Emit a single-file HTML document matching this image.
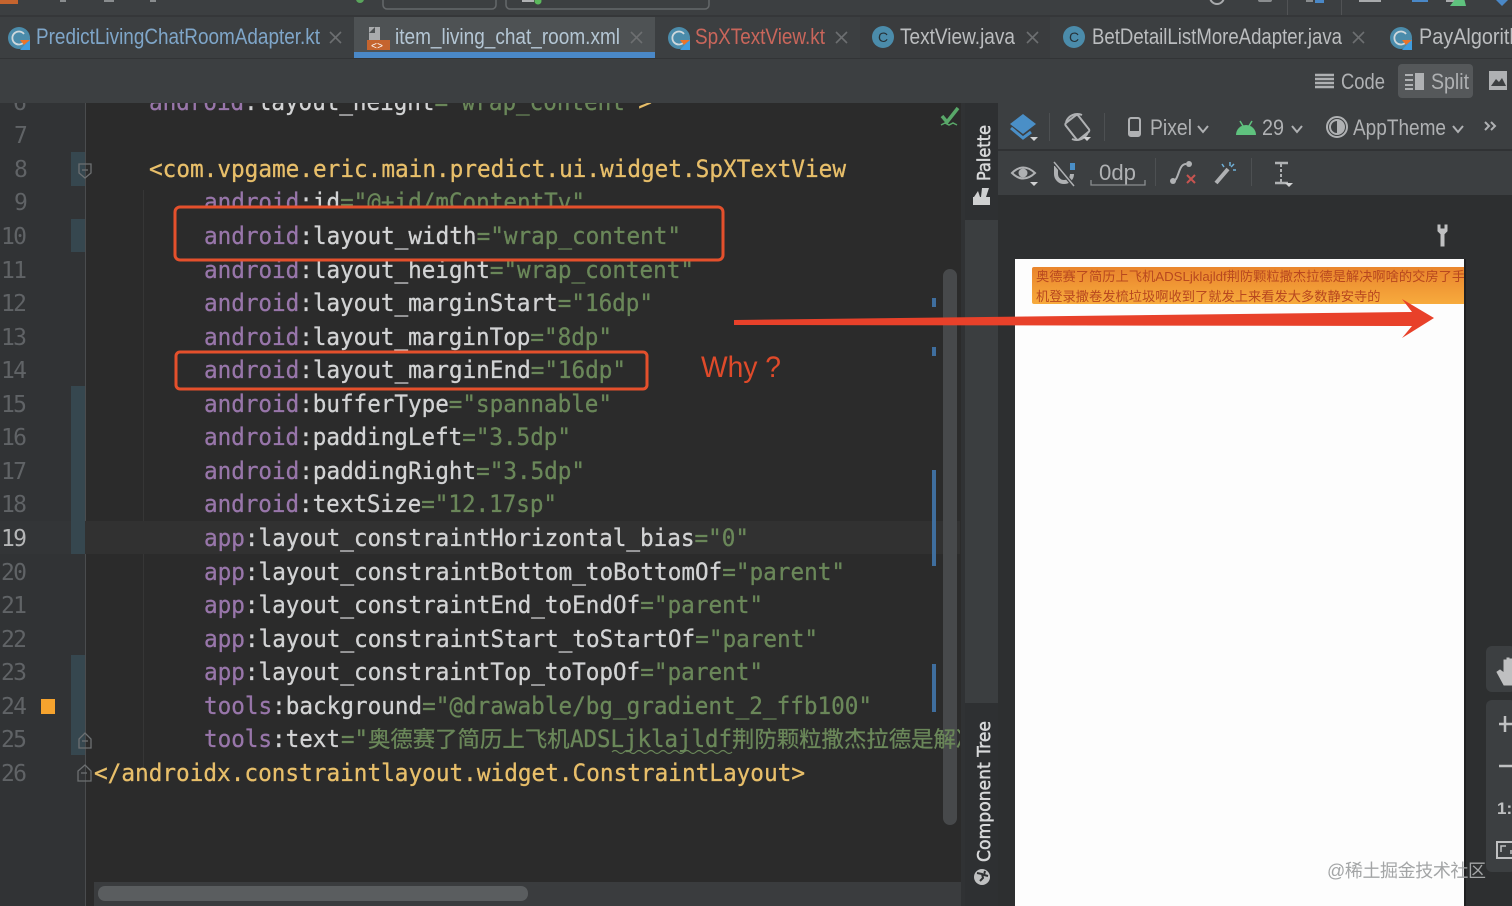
<!DOCTYPE html>
<html><head><meta charset="utf-8"><style>
html,body{margin:0;padding:0;background:#2b2b2b;width:1512px;height:906px;overflow:hidden}
svg{display:block}
.c{font-family:"DejaVu Sans Mono","Noto Sans CJK SC",monospace;font-size:24px}
.n{font-family:"DejaVu Sans Mono",monospace;font-size:23px;fill:#606366}
.t{font-family:"Liberation Sans",sans-serif;font-size:22px}
.u{font-family:"Liberation Sans",sans-serif;font-size:22px;fill:#afb1b3}
.a{fill:#9876aa;stroke:#9876aa;stroke-width:.3}.w{fill:#d2d3d4;stroke:#d2d3d4;stroke-width:.3}.g{fill:#6a8759;stroke:#6a8759;stroke-width:.3}.y{fill:#e8bf6a;stroke:#e8bf6a;stroke-width:.3}
.x{stroke:#6d6f71;stroke-width:1.6;fill:none}
.i{fill:none;stroke:#afb1b3;stroke-width:2}
</style></head><body>
<svg width="1512" height="906" viewBox="0 0 1512 906" xmlns="http://www.w3.org/2000/svg">
<defs>
<linearGradient id="og" x1="0" y1="0" x2="0" y2="1"><stop offset="0" stop-color="#e9842c"/><stop offset="1" stop-color="#f7ab3d"/></linearGradient>
<clipPath id="ed"><rect x="0" y="103" width="960" height="803"/></clipPath>
<clipPath id="pv"><rect x="1015" y="259" width="449" height="647"/></clipPath>
<clipPath id="top"><rect x="0" y="0" width="1512" height="15"/></clipPath>
</defs>
<!-- top chrome -->
<rect width="1512" height="103" fill="#3c3f41"/>
<rect y="15" width="1512" height="2" fill="#353739"/>
<rect y="58" width="1512" height="1" fill="#323436"/>
<g clip-path="url(#top)">
<rect x="0" y="-6" width="18" height="10" fill="#c5642e"/>
<rect x="383" y="-10" width="113" height="19" rx="4" fill="none" stroke="#65686a" stroke-width="1.5"/>
<rect x="506" y="-10" width="203" height="19" rx="4" fill="none" stroke="#65686a" stroke-width="1.5"/>
<circle cx="538" cy="1" r="3.5" fill="#5bb85c"/>
<rect x="522" y="-4" width="12" height="6" fill="#afb1b3"/>
<circle cx="360" cy="-1" r="4" fill="#5aa55c"/>
<rect x="60" y="-3" width="6" height="5" fill="#8a8d8f"/><rect x="104" y="-3" width="10" height="5" fill="#8a8d8f"/><rect x="150" y="-3" width="6" height="5" fill="#8a8d8f"/>
<circle cx="1217" cy="-3" r="7" fill="none" stroke="#a8aaac" stroke-width="2"/>
<rect x="1258" y="-3" width="14" height="5" rx="2" fill="#8a8d8f"/>
<rect x="1306" y="-3" width="7" height="5" fill="#8a8d8f"/><rect x="1315" y="-3" width="9" height="6" fill="#4a88c7"/>
<rect x="1359" y="-3" width="22" height="5" fill="#a8aaac"/>
<rect x="1412" y="-3" width="16" height="5" fill="#4a88c7"/>
<path d="M1446 -3h10v5h-10z" fill="#a8aaac"/><path d="M1450 6l6-8 8 0 2 8z" fill="#5fc27e"/>
<path d="M1494 -2h16l-8 8z" fill="#4a88c7"/>
</g>
<rect x="1287" y="0" width="1" height="15" fill="#515355"/><rect x="1341" y="0" width="1" height="15" fill="#515355"/>
<!-- tabs -->
<rect x="354" y="17" width="301" height="41" fill="#4e5254"/>
<rect x="354" y="52" width="301" height="6" fill="#4a88c7"/>
<rect x="860" y="17" width="190" height="41" fill="#3a3c3e"/>
<!-- tab icons -->
<g>
<circle cx="19" cy="38" r="11" fill="#4b8cab"/><path d="M24 34a6.500 6.500 0 1 0 0 8" fill="none" stroke="#cfd8dc" stroke-width="1.8"/><path d="M20 50l10-11v11z" fill="#3f9de0"/><path d="M20 40l10 0-6 5z" fill="#e8742c"/>
<path d="M369 27h11v13h-11z" fill="#a9abad"/><path d="M369 33l6-6v6z" fill="#4e5254"/><rect x="367" y="40" width="23" height="10" fill="#c5642e"/><text x="371" y="49" font-family="Liberation Mono" font-size="10" fill="#fff">&lt;&gt;</text>
<circle cx="679" cy="38" r="11" fill="#4b8cab"/><path d="M684 34a6.500 6.500 0 1 0 0 8" fill="none" stroke="#cfd8dc" stroke-width="1.800"/><path d="M680 50l10-11v11z" fill="#3f9de0"/><path d="M680 40l10 0-6 5z" fill="#e8742c"/>
<circle cx="883" cy="37" r="11" fill="#4b8cab"/><text x="878" y="42" font-family="Liberation Sans" font-size="14" fill="#263238">C</text>
<circle cx="1074" cy="37" r="11" fill="#4b8cab"/><text x="1069" y="42" font-family="Liberation Sans" font-size="14" fill="#263238">C</text>
<circle cx="1401" cy="38" r="11" fill="#4b8cab"/><path d="M1406 34a6.500 6.500 0 1 0 0 8" fill="none" stroke="#cfd8dc" stroke-width="1.800"/><path d="M1402 50l10-11v11z" fill="#3f9de0"/><path d="M1402 40l10 0-6 5z" fill="#e8742c"/>
</g>
<text class="t" x="36" y="44" fill="#7fa6c9" textLength="284" lengthAdjust="spacingAndGlyphs">PredictLivingChatRoomAdapter.kt</text>
<text class="t" x="395" y="44" fill="#b4c6d4" textLength="225" lengthAdjust="spacingAndGlyphs">item_living_chat_room.xml</text>
<text class="t" x="695" y="44" fill="#c9665b" textLength="130" lengthAdjust="spacingAndGlyphs">SpXTextView.kt</text>
<text class="t" x="900" y="44" fill="#bbbdbf" textLength="115" lengthAdjust="spacingAndGlyphs">TextView.java</text>
<text class="t" x="1092" y="44" fill="#bbbdbf" textLength="250" lengthAdjust="spacingAndGlyphs">BetDetailListMoreAdapter.java</text>
<text class="t" x="1419" y="44" fill="#bbbdbf" textLength="118" lengthAdjust="spacingAndGlyphs">PayAlgorithm</text>
<path class="x" d="M330 32l11 11M341 32l-11 11M631 32l11 11M642 32l-11 11M836 32l11 11M847 32l-11 11M1027 32l11 11M1038 32l-11 11M1353 32l11 11M1364 32l-11 11"/>
<!-- code/split -->
<path d="M1315 75h19M1315 79h19M1315 83h19M1315 87h19" stroke="#afb1b3" stroke-width="2.400"/>
<text class="u" x="1341" y="89" textLength="44" lengthAdjust="spacingAndGlyphs">Code</text>
<rect x="1398" y="64" width="75" height="34" rx="4" fill="#55585a"/>
<path d="M1405 75h8M1405 80h8M1405 85h8M1405 89h8" stroke="#afb1b3" stroke-width="2"/><rect x="1415" y="73" width="9" height="17" fill="#afb1b3"/>
<text class="u" x="1431" y="89" textLength="38" lengthAdjust="spacingAndGlyphs">Split</text>
<rect x="1489" y="71" width="18" height="19" fill="#afb1b3"/><path d="M1491 86l5-7 3 3 3-4 4 8z" fill="#3c3f41"/>
<!-- editor -->
<rect x="0" y="103" width="965" height="803" fill="#2b2b2b"/>
<rect x="0" y="103" width="85" height="803" fill="#313335"/>
<rect x="85" y="103" width="1" height="803" fill="#4a4c4e"/>
<rect x="143" y="190" width="1" height="590" fill="#363636"/>
<rect x="85" y="521" width="875" height="33" fill="#313131"/>
<rect x="0" y="521" width="85" height="33" fill="#333537"/>
<!-- editor scrollbars drawn beneath the code text -->
<rect x="94" y="882" width="868" height="24" fill="#3a3c3e"/>
<rect x="98" y="886" width="430" height="15" rx="7" fill="#5a5d5f"/>
<rect x="943" y="269" width="14" height="556" rx="7" fill="#47494b"/>
<g fill="#3f6e9e"><rect x="932" y="298" width="4" height="9"/><rect x="932" y="347" width="4" height="9"/><rect x="932" y="470" width="4" height="96"/><rect x="932" y="664" width="4" height="48"/></g>
<g fill="#36474f"><rect x="71" y="152" width="14" height="34"/><rect x="71" y="219" width="14" height="33"/><rect x="71" y="386" width="14" height="168"/><rect x="71" y="655" width="14" height="100"/></g>
<g fill="none" stroke="#6d7072" stroke-width="1.300"><path d="M79 164h12v9l-6 5-6-5z"/><path d="M82 170h6"/><path d="M79 748h12v-9l-6-6-6 6z"/><path d="M82 741h6"/><path d="M78 781h13v-10l-6-6-7 6z"/><path d="M81 773h6"/></g>
<g class="n" clip-path="url(#ed)">
<text x="13" y="110">6</text>
<text x="14" y="143">7</text><text x="14" y="177">8</text><text x="14" y="210">9</text>
<text x="1" y="244" textLength="26">10</text><text x="1" y="278" textLength="26">11</text><text x="1" y="311" textLength="26">12</text><text x="1" y="345" textLength="26">13</text><text x="1" y="378" textLength="26">14</text><text x="1" y="412" textLength="26">15</text><text x="1" y="445" textLength="26">16</text><text x="1" y="479" textLength="26">17</text><text x="1" y="512" textLength="26">18</text>
<text x="1" y="546" textLength="26" style="fill:#b5b6b7">19</text>
<text x="1" y="580" textLength="26">20</text><text x="1" y="613" textLength="26">21</text><text x="1" y="647" textLength="26">22</text><text x="1" y="680" textLength="26">23</text><text x="1" y="714" textLength="26">24</text><text x="1" y="747" textLength="26">25</text><text x="1" y="781" textLength="26">26</text>
</g>
<rect x="41" y="699" width="14" height="15" fill="#f5a32e"/>
<g class="c" clip-path="url(#ed)">
<text x="149" y="110" textLength="503" lengthAdjust="spacingAndGlyphs"><tspan class="a">android</tspan><tspan class="w">:layout_height</tspan><tspan class="g">="wrap_content"</tspan><tspan class="y">&gt;</tspan></text>
<text x="149" y="177" textLength="697" lengthAdjust="spacingAndGlyphs" class="y">&lt;com.vpgame.eric.main.predict.ui.widget.SpXTextView</text>
<text x="204" y="210" textLength="381" lengthAdjust="spacingAndGlyphs"><tspan class="a">android</tspan><tspan class="w">:id</tspan><tspan class="g">="@+id/mContentTv"</tspan></text>
</g>
<!-- box 1 fill -->
<rect x="175" y="207" width="548" height="53" rx="5" fill="#2b2b2b"/>
<g class="c" clip-path="url(#ed)">
<text x="204" y="244" textLength="477" lengthAdjust="spacingAndGlyphs"><tspan class="a">android</tspan><tspan class="w">:layout_width</tspan><tspan class="g">="wrap_content"</tspan></text>
<text x="204" y="278" textLength="490" lengthAdjust="spacingAndGlyphs"><tspan class="a">android</tspan><tspan class="w">:layout_height</tspan><tspan class="g">="wrap_content"</tspan></text>
<text x="204" y="311" textLength="449" lengthAdjust="spacingAndGlyphs"><tspan class="a">android</tspan><tspan class="w">:layout_marginStart</tspan><tspan class="g">="16dp"</tspan></text>
<text x="204" y="345" textLength="408" lengthAdjust="spacingAndGlyphs"><tspan class="a">android</tspan><tspan class="w">:layout_marginTop</tspan><tspan class="g">="8dp"</tspan></text>
<text x="204" y="378" textLength="422" lengthAdjust="spacingAndGlyphs"><tspan class="a">android</tspan><tspan class="w">:layout_marginEnd</tspan><tspan class="g">="16dp"</tspan></text>
<text x="204" y="412" textLength="408" lengthAdjust="spacingAndGlyphs"><tspan class="a">android</tspan><tspan class="w">:bufferType</tspan><tspan class="g">="spannable"</tspan></text>
<text x="204" y="445" textLength="367" lengthAdjust="spacingAndGlyphs"><tspan class="a">android</tspan><tspan class="w">:paddingLeft</tspan><tspan class="g">="3.5dp"</tspan></text>
<text x="204" y="479" textLength="381" lengthAdjust="spacingAndGlyphs"><tspan class="a">android</tspan><tspan class="w">:paddingRight</tspan><tspan class="g">="3.5dp"</tspan></text>
<text x="204" y="512" textLength="353" lengthAdjust="spacingAndGlyphs"><tspan class="a">android</tspan><tspan class="w">:textSize</tspan><tspan class="g">="12.17sp"</tspan></text>
<text x="204" y="546" textLength="545" lengthAdjust="spacingAndGlyphs"><tspan class="a">app</tspan><tspan class="w">:layout_constraintHorizontal_bias</tspan><tspan class="g">="0"</tspan></text>
<text x="204" y="580" textLength="641" lengthAdjust="spacingAndGlyphs"><tspan class="a">app</tspan><tspan class="w">:layout_constraintBottom_toBottomOf</tspan><tspan class="g">="parent"</tspan></text>
<text x="204" y="613" textLength="559" lengthAdjust="spacingAndGlyphs"><tspan class="a">app</tspan><tspan class="w">:layout_constraintEnd_toEndOf</tspan><tspan class="g">="parent"</tspan></text>
<text x="204" y="647" textLength="614" lengthAdjust="spacingAndGlyphs"><tspan class="a">app</tspan><tspan class="w">:layout_constraintStart_toStartOf</tspan><tspan class="g">="parent"</tspan></text>
<text x="204" y="680" textLength="559" lengthAdjust="spacingAndGlyphs"><tspan class="a">app</tspan><tspan class="w">:layout_constraintTop_toTopOf</tspan><tspan class="g">="parent"</tspan></text>
<text x="204" y="714" textLength="668" lengthAdjust="spacingAndGlyphs"><tspan class="a">tools</tspan><tspan class="w">:background</tspan><tspan class="g">="@drawable/bg_gradient_2_ffb100"</tspan></text>
<text x="204" y="747" textLength="68" lengthAdjust="spacingAndGlyphs" class="a">tools</text>
<text x="272" y="747" textLength="68" lengthAdjust="spacingAndGlyphs" class="w">:text</text>
<text x="341" y="747" textLength="27" lengthAdjust="spacingAndGlyphs" class="g">="</text>
<text x="368" y="747" font-size="22.4" class="g">奥德赛了简历上飞机</text>
<text x="570" y="747" textLength="162" lengthAdjust="spacingAndGlyphs" class="g">ADSLjklajldf</text>
<text x="732" y="747" font-size="22.4" class="g">荆防颗粒撒杰拉德是解决</text>
<text x="94" y="781" textLength="711" lengthAdjust="spacingAndGlyphs" class="y">&lt;/androidx.constraintlayout.widget.ConstraintLayout&gt;</text>
</g>
<path d="M612 752q3-3 6 0t6 0 6 0 6 0 6 0 6 0 6 0 6 0 6 0 6 0 6 0 6 0 6 0 6 0 6 0 6 0 6 0 6 0 6 0 6 0" fill="none" stroke="#6a8759" stroke-width="1.200"/>
<!-- annotations -->
<rect x="175" y="207" width="548" height="53" rx="5" fill="none" stroke="#e4502c" stroke-width="3"/>
<rect x="176" y="352" width="471" height="37" rx="4" fill="none" stroke="#e4502c" stroke-width="3"/>
<text x="701" y="377" font-family="Liberation Sans" font-size="30" fill="#df4a2a" textLength="80" lengthAdjust="spacingAndGlyphs">Why ?</text>
<path d="M942 116l5 6 11-14" fill="none" stroke="#59a869" stroke-width="3.500"/><path d="M941 125l4-2 4 2 4-2 4 2" fill="none" stroke="#59a869" stroke-width="1.500"/>
<!-- side strip -->
<rect x="965" y="103" width="33" height="803" fill="#3b3e40"/>
<rect x="961" y="103" width="4" height="803" fill="#303234"/>
<rect x="965" y="103" width="33" height="117" fill="#2e3032"/>
<rect x="965" y="703" width="33" height="203" fill="#2e3032"/>
<text transform="translate(990,181) rotate(-90)" font-family="DejaVu Sans,sans-serif" font-size="18" stroke="#d8d9da" stroke-width=".5" fill="#d8d9da" textLength="56" lengthAdjust="spacingAndGlyphs">Palette</text>
<path d="M974 197l4-6 2 6zM981 197l1-9 7 0-3 9z" fill="#cfd0d1"/><rect x="973" y="197" width="17" height="8" fill="#cfd0d1"/>
<text transform="translate(990,862) rotate(-90)" font-family="DejaVu Sans,sans-serif" font-size="18" stroke="#d8d9da" stroke-width=".5" fill="#d8d9da" textLength="141" lengthAdjust="spacingAndGlyphs">Component Tree</text>
<circle cx="982" cy="877" r="8" fill="#bfc0c1"/><path d="M977 873l5 1 1 4-3 3M985 871l-1 4 4 1" fill="none" stroke="#2e3032" stroke-width="2"/>
<!-- design area -->
<rect x="998" y="103" width="514" height="803" fill="#2d2f30"/>
<rect x="998" y="103" width="514" height="46" fill="#3c3f41"/>
<rect x="998" y="151" width="514" height="44" fill="#3c3f41"/>
<rect x="998" y="149" width="514" height="2" fill="#303234"/>
<!-- row 1 -->
<path d="M1023 114l13 10-13 10-13-10z" fill="#4a8fc7"/><path d="M1011 128l12 10 8-6" fill="none" stroke="#4a8fc7" stroke-width="3"/><path d="M1030 137h8l-4 4z" fill="#d0d1d2"/>
<rect x="1049" y="113" width="1" height="28" fill="#4d5052"/><rect x="1104" y="113" width="1" height="28" fill="#4d5052"/>
<rect x="1069" y="117" width="16" height="21" rx="2" transform="rotate(-38 1077 127)" class="i" stroke-width="1.400"/>
<path d="M1066 122a12 12 0 0 1 16-7M1088 132a12 12 0 0 1-16 7" class="i" stroke-width="1.500"/><path d="M1083 137h8l-4 4z" fill="#d0d1d2"/>
<rect x="1129" y="118" width="11" height="18" rx="2" fill="none" stroke="#afb1b3" stroke-width="2"/><rect x="1129" y="131" width="11" height="5" fill="#afb1b3"/>
<text class="u" x="1150" y="135" textLength="42" lengthAdjust="spacingAndGlyphs">Pixel</text>
<path d="M1198 126l5 6 5-6" class="i" stroke="#8a8d8f"/>
<path d="M1236 135a10 10 0 0 1 20 0z" fill="#5fc27e"/><path d="M1240 121l3 5M1252 121l-3 5" stroke="#5fc27e" stroke-width="1.500"/>
<text class="u" x="1262" y="135" textLength="22" lengthAdjust="spacingAndGlyphs">29</text>
<path d="M1292 126l5 6 5-6" class="i" stroke="#8a8d8f"/>
<circle cx="1337" cy="127" r="10" class="i" stroke-width="1.500"/><path d="M1337 120a7 7 0 0 1 0 14z" fill="#afb1b3"/><circle cx="1337" cy="127" r="7" class="i" stroke-width="1.500"/>
<text class="u" x="1353" y="135" textLength="93" lengthAdjust="spacingAndGlyphs">AppTheme</text>
<path d="M1453 126l5 6 5-6" class="i" stroke="#8a8d8f"/>
<path d="M1485 122l4 4-4 4M1491 122l4 4-4 4" class="i" stroke-width="1.300"/>
<!-- row 2 -->
<path d="M1012 173q11-11 23 0q-12 11-23 0z" class="i"/><circle cx="1023" cy="173" r="4.500" fill="#afb1b3"/><path d="M1030 182h8l-4 4z" fill="#d0d1d2"/>
<path d="M1056 166v8a8 8 0 0 0 16 0" fill="none" stroke="#afb1b3" stroke-width="4"/><rect x="1070" y="163" width="5" height="7" fill="#4a8fc7"/><path d="M1054 162l20 24" stroke="#3c3f41" stroke-width="4"/><path d="M1054 162l20 24" stroke="#afb1b3" stroke-width="1.500"/>
<text class="u" x="1099" y="180" textLength="37" lengthAdjust="spacingAndGlyphs">0dp</text>
<path d="M1091 180v5h54v-5" fill="none" stroke="#8a8d8f" stroke-width="1.300"/>
<rect x="1155" y="158" width="1" height="28" fill="#4d5052"/><rect x="1251" y="158" width="1" height="28" fill="#4d5052"/>
<path d="M1173 181c6 0 5-17 13-17" fill="none" stroke="#afb1b3" stroke-width="2"/><circle cx="1173" cy="181" r="3" fill="#afb1b3"/><circle cx="1189" cy="164" r="3" fill="#afb1b3"/>
<path d="M1187 175l8 8M1195 175l-8 8" stroke="#c75450" stroke-width="2"/>
<path d="M1216 183l12-14" stroke="#afb1b3" stroke-width="4"/><path d="M1230 162v4M1236 170h-3M1222 164l2 3M1234 164l-3 3" stroke="#6fb0d8" stroke-width="1.500"/>
<path d="M1275 163h13M1275 183h13" stroke="#afb1b3" stroke-width="2.500"/><path d="M1281 164v18" stroke="#afb1b3" stroke-width="2" stroke-dasharray="3 2"/><path d="M1285 183h8l-4 4z" fill="#d0d1d2"/>
<!-- wrench -->
<path d="M1438 225v6l3 3v12h3v-12l3-3v-6l-2 0v4h-5v-4z" fill="#bfc0c1" stroke="#bfc0c1"/>
<!-- preview -->
<rect x="1015" y="259" width="449" height="647" fill="#fdfdfd"/>
<rect x="1464" y="259" width="2" height="647" fill="#1f2021"/>
<g clip-path="url(#pv)">
<rect x="1032" y="267" width="440" height="37" rx="2" fill="url(#og)"/>
<text x="1036" y="281" font-family="'Liberation Sans','Noto Sans CJK SC',sans-serif" font-size="13.26" fill="#b8481f">奥德赛了简历上飞机ADSLjklajldf荆防颗粒撒杰拉德是解决啊啥的交房了手</text>
<text x="1036" y="301" font-family="'Liberation Sans','Noto Sans CJK SC',sans-serif" font-size="13.26" fill="#b8481f">机登录撒卷发梳垃圾啊收到了就发上来看发大多数静安寺的</text>
</g>
<!-- arrow -->
<path d="M734 320L1412 312L1402 299L1434 318L1402 338L1412 326L734 325Z" fill="#e8412a"/>
<!-- right tool panels -->
<rect x="1486" y="646" width="30" height="46" rx="6" fill="#3c3f41"/>
<rect x="1486" y="700" width="30" height="172" rx="6" fill="#3c3f41"/>
<path d="M1497 672l3-2 4 3v-13h2v10h1v-12h2v12h1v-11h2v12h1v-8h2v22h-11z" fill="#bfc0c1" stroke="#bfc0c1"/>
<path d="M1499 724h13M1505 716v16" stroke="#bfc0c1" stroke-width="2.500"/>
<path d="M1499 766h13" stroke="#bfc0c1" stroke-width="2.500"/>
<text x="1497" y="814" font-family="Liberation Sans" font-weight="bold" font-size="17" fill="#bfc0c1">1:1</text>
<rect x="1497" y="842" width="20" height="16" fill="none" stroke="#bfc0c1" stroke-width="2"/><path d="M1501 852v-6h5M1511 850v4" fill="none" stroke="#bfc0c1" stroke-width="1.500"/>
<!-- watermark -->
<text x="1327" y="877" font-family="'Liberation Sans','Noto Sans CJK SC',sans-serif" font-size="18" fill="#a3a5a6" textLength="159">@稀土掘金技术社区</text>
</svg>
</body></html>
